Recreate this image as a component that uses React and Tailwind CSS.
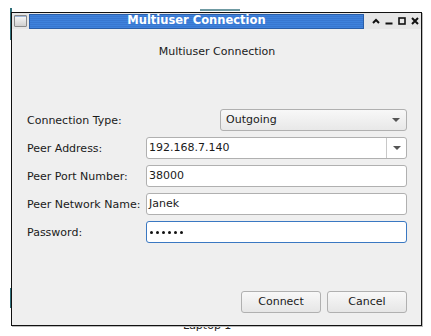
import React from "react";

const font = { fontFamily: '"DejaVu Sans", "Liberation Sans", sans-serif' };

function Arrow() {
  return (
    <svg width="8" height="5" viewBox="0 0 8 5" className="block">
      <path d="M0 0 L8 0 L4 4 Z" fill="#555" />
    </svg>
  );
}

function Row({ label, children }) {
  return (
    <div className="flex items-center h-[22px]">
      <div className="w-[119px] shrink-0 text-[11px] whitespace-nowrap text-[#1a1a1a] leading-none">{label}</div>
      <div className="flex-1 flex h-full">{children}</div>
    </div>
  );
}

export default function App() {
  return (
    <div className="relative w-[431px] h-[336px] bg-white overflow-hidden" style={font}>
      {/* desktop artifacts behind window */}
      <div className="absolute left-[10px] top-[8px] w-[2px] h-[32px] bg-[#2f6f7a]" />
      <div className="absolute left-[10px] top-[288px] w-[2px] h-[20px] bg-[#2f6f7a]" />
      <div className="absolute left-[200px] top-[9px] w-[40px] h-[2px] bg-[#6f9aa2]" />
      <div className="absolute left-[183px] top-[320px] text-[11px] leading-none text-[#222]">Laptop 1</div>

      {/* window */}
      <div className="absolute left-[11px] top-[12px] w-[411px] h-[314px] border border-[#111] bg-[#efefef] flex flex-col shadow-[1px_1px_0_#bbb]">
        {/* title bar */}
        <div className="h-[16px] flex items-center bg-[#e6e6e6] px-[2px] gap-[2px]">
          <div className="w-[13px] h-[12px] border border-[#8a8a8a] rounded-[1px] bg-gradient-to-b from-[#fafafa] to-[#cfcfcf] shadow-[inset_0_1px_0_#9fb6d9]" />
          <div className="w-[337px] h-[15px] border border-[#2a5ea8] flex items-center justify-center text-white font-bold text-[11.5px] leading-none"
            style={{ background: "repeating-linear-gradient(to bottom,#3f82dc 0px,#3f82dc 1px,#3877d0 1px,#3877d0 2px)" }}>
            Multiuser Connection
          </div>
          <div className="flex items-center ml-[6px] gap-[5px] text-black">
            <svg width="8" height="8" viewBox="0 0 8 8"><path d="M1 6 L4 3 L7 6" stroke="#111" strokeWidth="2" fill="none" /></svg>
            <svg width="8" height="8" viewBox="0 0 8 8"><rect x="0.5" y="5.5" width="7" height="2" fill="#111" /></svg>
            <svg width="8" height="8" viewBox="0 0 8 8"><rect x="1" y="1" width="6" height="6" stroke="#111" strokeWidth="1.6" fill="none" /></svg>
            <svg width="8" height="8" viewBox="0 0 8 8"><path d="M1 1 L7 7 M7 1 L1 7" stroke="#111" strokeWidth="2" /></svg>
          </div>
        </div>

        {/* body */}
        <div className="flex-1 flex flex-col pl-[15px] pr-[14px] pb-[12px]">
          <div className="mt-[16px] text-center text-[11px] leading-[14px] text-[#1a1a1a]">Multiuser Connection</div>
          <div className="mt-[50px] flex flex-col gap-[6px]">
            <Row label="Connection Type:">
              <div className="ml-auto w-[187px] h-full border border-[#b0b0b0] rounded-[3px] bg-gradient-to-b from-[#f8f8f8] to-[#e8e8e8] flex items-center pl-[5px] pr-[6px] text-[11px] text-[#1a1a1a]">
                <span className="flex-1">Outgoing</span>
                <Arrow />
              </div>
            </Row>
            <Row label="Peer Address:">
              <div className="w-full h-full border border-[#b0b0b0] rounded-[3px] bg-white flex items-center text-[11px] text-[#1a1a1a]">
                <span className="flex-1 pl-[2px]">192.168.7.140</span>
                <div className="w-[20px] h-full border-l border-[#c8c8c8] flex items-center justify-center"><Arrow /></div>
              </div>
            </Row>
            <Row label="Peer Port Number:">
              <div className="w-full h-full border border-[#b0b0b0] rounded-[3px] bg-white flex items-center pl-[2px] text-[11px] text-[#1a1a1a]">38000</div>
            </Row>
            <Row label="Peer Network Name:">
              <div className="w-full h-full border border-[#b0b0b0] rounded-[3px] bg-white flex items-center pl-[2px] text-[11px] text-[#1a1a1a]">Janek</div>
            </Row>
            <Row label="Password:">
              <div className="w-full h-full border border-[#3a78c2] rounded-[3px] bg-white flex items-center pl-[3px] gap-[3px]">
                {[0, 1, 2, 3, 4, 5].map((i) => (
                  <span key={i} className="w-[3px] h-[3px] rounded-full bg-[#111]" />
                ))}
              </div>
            </Row>
          </div>
          <div className="mt-auto flex justify-end gap-[6px]">
            <button className="w-[80px] h-[22px] border border-[#b0b0b0] rounded-[3px] bg-gradient-to-b from-[#f8f8f8] to-[#e6e6e6] text-[11px] text-[#1a1a1a]">Connect</button>
            <button className="w-[80px] h-[22px] border border-[#b0b0b0] rounded-[3px] bg-gradient-to-b from-[#f8f8f8] to-[#e6e6e6] text-[11px] text-[#1a1a1a]">Cancel</button>
          </div>
        </div>
      </div>
    </div>
  );
}
